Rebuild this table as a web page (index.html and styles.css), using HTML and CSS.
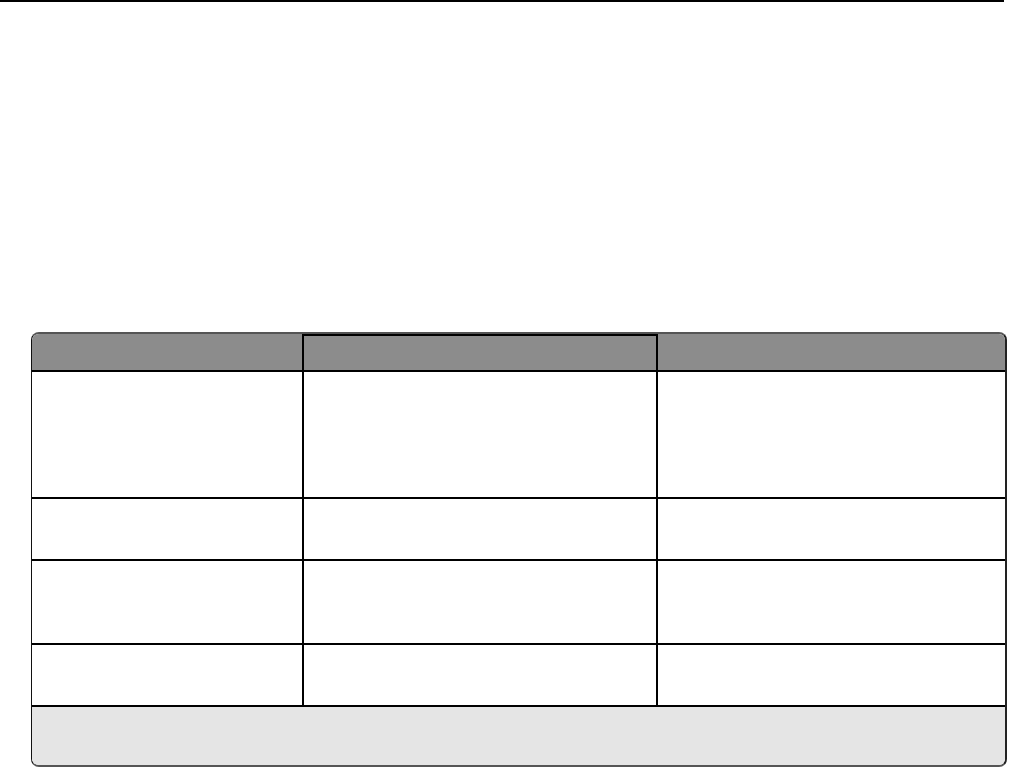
FILE: index.html
```html
<!DOCTYPE html>
<html>
<head>
<meta charset="utf-8">
<link rel="stylesheet" href="styles.css">
</head>
<body>
<div class="rule"></div>
<div class="table">
  <div class="row head">
    <div class="cell"></div>
    <div class="cell mid"></div>
    <div class="cell"></div>
  </div>
  <div class="row r1">
    <div class="cell"></div>
    <div class="cell"></div>
    <div class="cell"></div>
  </div>
  <div class="row r2">
    <div class="cell"></div>
    <div class="cell"></div>
    <div class="cell"></div>
  </div>
  <div class="row r3">
    <div class="cell"></div>
    <div class="cell"></div>
    <div class="cell"></div>
  </div>
  <div class="row r4">
    <div class="cell"></div>
    <div class="cell"></div>
    <div class="cell"></div>
  </div>
  <div class="foot"></div>
</div>
</body>
</html>
```
FILE: styles.css
```css
html, body {
  margin: 0;
  padding: 0;
  background: #fff;
  font-family: "Liberation Sans", Arial, sans-serif;
}
.rule {
  height: 2px;
  width: 1004px;
  background: #000;
}
.table {
  margin: 330px 0 0 31px;
  width: 976px;
  box-sizing: border-box;
  border-left: 1.5px solid #111;
  border-right: 2px solid #222;
  border-bottom: 2px solid #555;
  border-top: 2px solid #555;
  border-radius: 8px;
  overflow: hidden;
}
.row {
  display: grid;
  grid-template-columns: 270px 354px 1fr;
  border-top: 2px solid #000;
}
.row .cell + .cell {
  border-left: 2px solid #000;
}
.head {
  border-top: none;
  height: 36px;
  background: #8c8c8c;
}
.head .mid {
  box-shadow: inset 0 2px 0 #000;
}
.r1 { height: 125px; }
.r2 { height: 60px; }
.r3 { height: 82px; }
.r4 { height: 60px; }
.foot {
  border-top: 2px solid #000;
  height: 58px;
  background: #e5e5e5;
}
```
